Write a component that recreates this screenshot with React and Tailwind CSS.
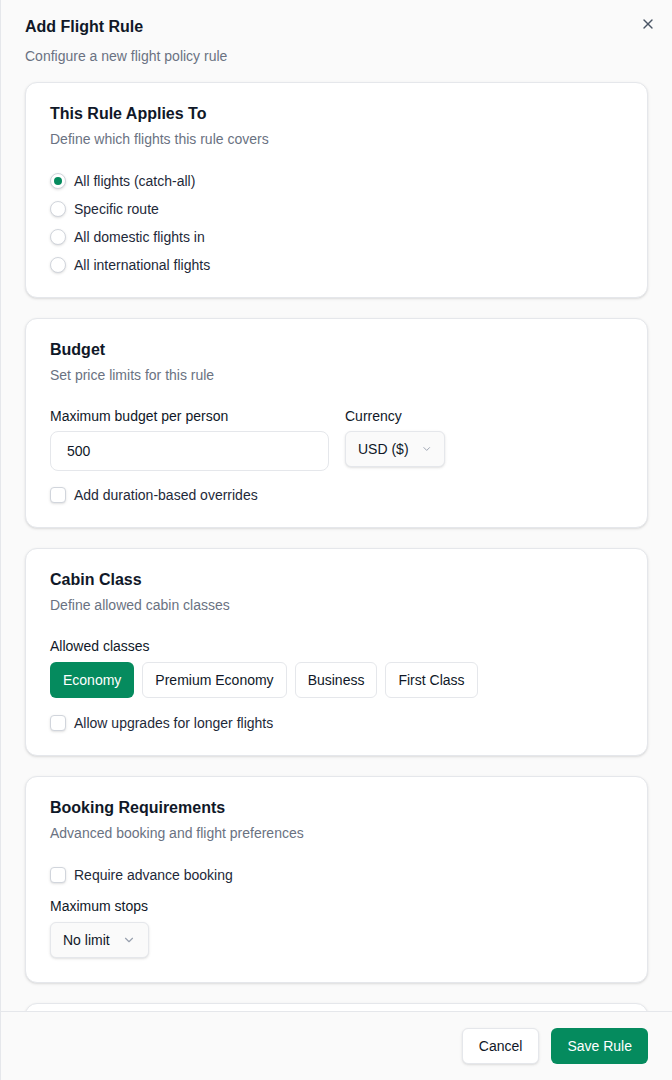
import { X, ChevronDown } from "lucide-react";

function Radio({ checked, label }) {
	return (
		<label className="flex items-center gap-2 h-5 text-sm text-gray-800">
			<span className="w-4 h-4 rounded-full border border-gray-300 bg-white flex items-center justify-center shadow-sm">
				{checked && <span className="w-2 h-2 rounded-full bg-[#058b5e]" />}
			</span>
			{label}
		</label>
	);
}

function Checkbox({ label }) {
	return (
		<label className="flex items-center gap-2 h-5 text-sm text-gray-800">
			<span className="w-4 h-4 rounded-[4px] border border-gray-300 bg-white shadow-sm" />
			{label}
		</label>
	);
}

function Card({ title, description, children, className = "" }) {
	return (
		<div
			className={`bg-white border border-gray-200 rounded-xl shadow-sm px-6 pt-[19px] ${className}`}
		>
			<h3 className="text-base leading-6 font-semibold text-gray-900">{title}</h3>
			<p className="text-sm leading-5 text-gray-500 mt-[3px]">{description}</p>
			{children}
		</div>
	);
}

function Select({ value, className = "" }) {
	return (
		<button
			className={`h-9 flex items-center gap-3 px-3 rounded-md border border-gray-200 bg-[#fafafa] text-sm text-gray-900 whitespace-nowrap shadow-sm ${className}`}
		>
			{value}
			<ChevronDown size={14} className="text-gray-400" />
		</button>
	);
}

export default function App() {
	const classes = ["Economy", "Premium Economy", "Business", "First Class"];

	return (
		<div
			className="h-screen flex flex-col bg-[#fafafa] border-l border-gray-200 overflow-hidden"
			style={{ fontFamily: '"Liberation Sans", Arial, sans-serif' }}
		>
			<div className="flex-1 overflow-hidden px-6 pt-[15px]">
				<div className="relative">
					<h2 className="text-base leading-6 font-semibold text-gray-900">Add Flight Rule</h2>
					<p className="text-sm leading-5 text-gray-500 mt-[7px]">
						Configure a new flight policy rule
					</p>
					<button className="absolute right-[-8px] top-[1px] text-gray-600">
						<X size={16} strokeWidth={2} />
					</button>
				</div>

				<div className="mt-4 flex flex-col gap-5">
					<Card
						title="This Rule Applies To"
						description="Define which flights this rule covers"
						className="pb-[22px]"
					>
						<div className="mt-[22px] flex flex-col gap-2">
							<Radio checked label="All flights (catch-all)" />
							<Radio label="Specific route" />
							<Radio label="All domestic flights in" />
							<Radio label="All international flights" />
						</div>
					</Card>

					<Card
						title="Budget"
						description="Set price limits for this rule"
						className="pb-[22px]"
					>
						<div className="mt-[21px] flex gap-4">
							<div className="w-[279px]">
								<div className="text-sm leading-5 text-gray-900">Maximum budget per person</div>
								<div className="mt-[5px] h-10 rounded-lg border border-gray-200 bg-white px-4 flex items-center text-sm text-gray-900">
									500
								</div>
							</div>
							<div className="w-[100px]">
								<div className="text-sm leading-5 text-gray-900">Currency</div>
								<Select value="USD ($)" className="mt-[5px] w-full" />
							</div>
						</div>
						<div className="mt-[14px]">
							<Checkbox label="Add duration-based overrides" />
						</div>
					</Card>

					<Card
						title="Cabin Class"
						description="Define allowed cabin classes"
						className="pb-[22px]"
					>
						<div className="mt-[21px] text-sm leading-5 text-gray-900">Allowed classes</div>
						<div className="mt-[6px] flex gap-2">
							{classes.map((c, i) => (
								<button
									key={c}
									className={
										i === 0
											? "h-9 px-[13px] rounded-md bg-[#058b5e] text-white text-sm"
											: "h-9 px-3 rounded-md border border-gray-200 bg-white text-gray-900 text-sm"
									}
								>
									{c}
								</button>
							))}
						</div>
						<div className="mt-[15px]">
							<Checkbox label="Allow upgrades for longer flights" />
						</div>
					</Card>

					<Card
						title="Booking Requirements"
						description="Advanced booking and flight preferences"
						className="pb-6"
					>
						<div className="mt-[22px]">
							<Checkbox label="Require advance booking" />
						</div>
						<div className="mt-[11px] text-sm leading-5 text-gray-900">Maximum stops</div>
						<Select value="No limit" className="mt-[6px]" />
					</Card>

					<div className="h-20 bg-white border border-gray-200 rounded-xl shadow-sm" />
				</div>
			</div>

			<div className="shrink-0 border-t border-gray-200 bg-[#fafafa] px-6 pt-4 pb-4 flex justify-end gap-3">
				<button className="h-9 px-4 rounded-md border border-gray-200 bg-white text-sm text-gray-900 shadow-sm">
					Cancel
				</button>
				<button className="h-9 px-4 rounded-md bg-[#058b5e] text-sm text-white font-medium">
					Save Rule
				</button>
			</div>
		</div>
	);
}
